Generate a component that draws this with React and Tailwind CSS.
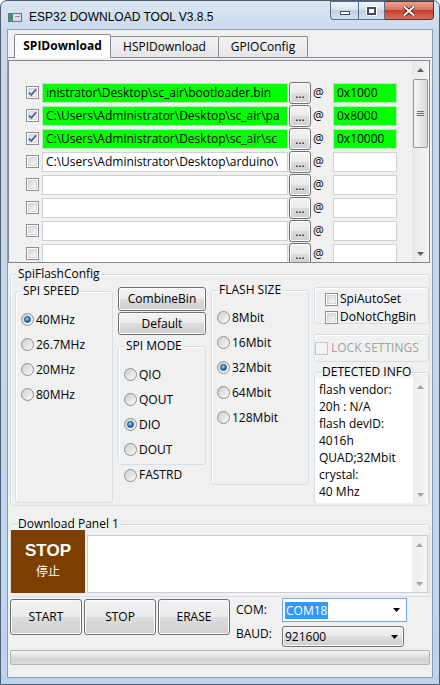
import React from 'react';

const btn =
  'border border-[#707070] rounded-[3px] bg-[linear-gradient(#f2f2f2_0%,#ebebeb_49%,#dddddd_50%,#cfcfcf_100%)] shadow-[inset_0_0_0_1px_#fbfbfb]';

const rows = [
  { on: true, green: true, path: 'inistrator\\Desktop\\sc_air\\bootloader.bin', addr: '0x1000' },
  { on: true, green: true, path: 'C:\\Users\\Administrator\\Desktop\\sc_air\\pa', addr: '0x8000' },
  { on: true, green: true, path: 'C:\\Users\\Administrator\\Desktop\\sc_air\\sc', addr: '0x10000' },
  { on: false, green: false, path: 'C:\\Users\\Administrator\\Desktop\\arduino\\', addr: '' },
  { on: false, green: false, path: '', addr: '' },
  { on: false, green: false, path: '', addr: '' },
  { on: false, green: false, path: '', addr: '' },
  { on: false, green: false, path: '', addr: '' },
];

function Tri({ up, color = '#5c5c5c' }) {
  return (
    <svg width="7" height="4" viewBox="0 0 7 4">
      <path d={up ? 'M0 4 L3.5 0 L7 4 Z' : 'M0 0 L7 0 L3.5 4 Z'} fill={color} />
    </svg>
  );
}

function Check({ checked, disabled }) {
  if (disabled) {
    return <span className="w-[13px] h-[13px] shrink-0 border border-[#c4c4c4] bg-[#f4f4f4]" />;
  }
  return (
    <span className="w-[13px] h-[13px] shrink-0 border border-[#8e8f8f] bg-white p-[1px] flex">
      <span className="flex-1 flex items-center justify-center border border-[#d3d6db] bg-[linear-gradient(135deg,#d4d8de,#f7f7f7)]">
        {checked && (
          <svg width="9" height="9" viewBox="0 0 9 9" className="-m-[1px]">
            <path d="M1 4.6 L3.4 7 L8 1.2" fill="none" stroke="#4b5f99" strokeWidth="1.8" />
          </svg>
        )}
      </span>
    </span>
  );
}

function Radio({ checked, label, className = 'h-[25px]' }) {
  return (
    <div className={`flex items-center ${className}`}>
      <span className="w-[13px] h-[13px] shrink-0 rounded-full border border-[#8e8f8f] bg-[linear-gradient(135deg,#cdcdcd,#fbfbfb)] flex items-center justify-center">
        {checked && (
          <span className="w-[7px] h-[7px] rounded-full border border-[#1d4f80] bg-[radial-gradient(circle_at_40%_35%,#a6e0ff_0%,#2b87d8_45%,#0b3f78_100%)]" />
        )}
      </span>
      <span className="ml-[2px]">{label}</span>
    </div>
  );
}

function Group({ label, className = '', children }) {
  return (
    <fieldset className={`border border-[#d5dfe5] rounded-[3px] shadow-[inset_1px_1px_0_#ffffff] ${className}`}>
      {label && <legend className="ml-[6px] px-[1px] leading-[16px]">{label}</legend>}
      {children}
    </fieldset>
  );
}

function Field({ green, text, className = '' }) {
  return (
    <div
      className={`h-[20px] border overflow-hidden whitespace-nowrap pl-[3px] leading-[18px] ${
        green ? 'bg-[#00ff00] border-[#b8e8b8]' : 'bg-white border-[#cdd1d8]'
      } ${className}`}
    >
      {text}
    </div>
  );
}

function SmallScroll() {
  return (
    <div className="w-[15px] shrink-0 flex flex-col bg-[linear-gradient(90deg,#ececec,#f6f6f6)]">
      <div className="h-[17px] flex items-center justify-center">
        <Tri up color="#a3a3a3" />
      </div>
      <div className="flex-1" />
      <div className="h-[17px] flex items-center justify-center">
        <Tri color="#a3a3a3" />
      </div>
    </div>
  );
}

function FileList() {
  return (
    <div className="mt-[2px] w-[422px] h-[203px] shrink-0 border border-[#828790] flex">
      <div className="flex-1 overflow-hidden pt-[20px]">
        {rows.map((r, i) => (
          <div key={i} className="h-[23px] flex items-center pl-[17px]">
            <Check checked={r.on} />
            <Field green={r.green} text={r.path} className="ml-[3px] w-[246px] shrink-0" />
            <div className={`ml-[1px] w-[22px] h-[22px] shrink-0 flex items-end justify-center leading-[12px] pb-[3px] ${btn}`}>
              ...
            </div>
            <span className="ml-[2px] w-[20px] shrink-0">@</span>
            <Field green={r.green} text={r.addr} className="w-[64px] shrink-0" />
          </div>
        ))}
      </div>
      <div className="w-[17px] shrink-0 flex flex-col bg-[linear-gradient(90deg,#e7e7e7,#f5f5f5)]">
        <div className="h-[17px] flex items-center justify-center">
          <Tri up />
        </div>
        <div className="mt-[1px] mx-[1px] h-[69px] rounded-[2px] border border-[#979797] bg-[linear-gradient(90deg,#f6f6f6,#e8e8e8_50%,#d5d5d5)] flex flex-col items-center justify-center gap-[1px]">
          <span className="w-[7px] h-[1px] bg-[#6f6f6f]" />
          <span className="w-[7px] h-[1px] bg-[#6f6f6f]" />
          <span className="w-[7px] h-[1px] bg-[#6f6f6f]" />
        </div>
        <div className="flex-1" />
        <div className="h-[17px] flex items-center justify-center">
          <Tri />
        </div>
      </div>
    </div>
  );
}

function FlashConfig() {
  return (
    <Group label="SpiFlashConfig" className="ml-[2px] mt-[3px] w-[420px] h-[240px] shrink-0">
      <div className="flex items-start">
        <Group label="SPI SPEED" className="ml-[4px] mt-[1px] w-[98px] h-[220px] shrink-0">
          <div className="pt-[8px] pl-[5px]">
            <Radio checked label="40MHz" />
            <Radio label="26.7MHz" />
            <Radio label="20MHz" />
            <Radio label="80MHz" />
          </div>
        </Group>

        <div className="ml-[5px] w-[88px] shrink-0 flex flex-col">
          <div className={`mt-[5px] h-[24px] flex items-center justify-center ${btn}`}>CombineBin</div>
          <div className={`mt-[1px] h-[23px] flex items-center justify-center ${btn}`}>Default</div>
          <Group label="SPI MODE" className="mt-[3px] h-[127px]">
            <div className="pt-[8px] pl-[5px]">
              <Radio label="QIO" />
              <Radio label="QOUT" />
              <Radio checked label="DIO" />
              <Radio label="DOUT" />
            </div>
          </Group>
          <Radio label="FASTRD" className="mt-[3px] h-[14px] pl-[6px]" />
        </div>

        <Group label="FLASH SIZE" className="ml-[5px] w-[98px] h-[203px] shrink-0">
          <div className="pt-[7px] pl-[5px]">
            <Radio label="8Mbit" />
            <Radio label="16Mbit" />
            <Radio checked label="32Mbit" />
            <Radio label="64Mbit" />
            <Radio label="128Mbit" />
          </div>
        </Group>

        <div className="ml-[5px] w-[115px] shrink-0 flex flex-col">
          <div className="mt-[5px] h-[37px] border border-[#d5dfe5] rounded-[3px] shadow-[inset_1px_1px_0_#ffffff] pl-[10px] pt-[2px]">
            <div className="h-[18px] flex items-center">
              <Check />
              <span className="ml-[2px]">SpiAutoSet</span>
            </div>
            <div className="h-[18px] flex items-center">
              <Check />
              <span className="ml-[2px]">DoNotChgBin</span>
            </div>
          </div>
          <div className="mt-[10px] h-[28px] border border-[#d5dfe5] rounded-[3px] shadow-[inset_1px_1px_0_#ffffff] flex items-center">
            <Check disabled />
            <span className="ml-[3px] text-[#a0a0a0]">LOCK SETTINGS</span>
          </div>
          <Group label="DETECTED INFO" className="mt-[2px] h-[139px]">
            <div className="-mt-[2px] ml-[1px] w-[112px] h-[125px] bg-white flex">
              <div className="flex-1 pl-[3px] pt-[3px] leading-[17px] whitespace-nowrap overflow-hidden">
                <div>flash vendor:</div>
                <div>20h : N/A</div>
                <div>flash devID:</div>
                <div>4016h</div>
                <div>QUAD;32Mbit</div>
                <div>crystal:</div>
                <div>40 Mhz</div>
              </div>
              <SmallScroll />
            </div>
          </Group>
        </div>
      </div>
    </Group>
  );
}

function DownloadPanel() {
  return (
    <Group label="Download Panel 1" className="ml-[2px] mt-[10px] w-[420px] h-[81px] shrink-0">
      <div className="flex items-start">
        <div className="-mt-[2px] w-[74px] h-[63px] shrink-0 bg-[#7d3f00] flex flex-col items-center text-white">
          <span className="mt-[11px] text-[17px] leading-[20px] font-bold font-['Liberation_Sans',Arial,sans-serif]">STOP</span>
          <span className="mt-[3px] text-[12px] leading-[14px] font-['Noto_Sans_CJK_SC',sans-serif]">停止</span>
        </div>
        <div className="ml-[2px] mt-[3px] w-[341px] h-[58px] bg-white border border-[#c9cdd4] flex justify-end">
          <SmallScroll />
        </div>
      </div>
    </Group>
  );
}

function BottomBar() {
  return (
    <>
      <div className="mt-[2px] ml-[2px] flex items-start shrink-0">
        <div className="flex gap-[2px]">
          <div className={`w-[72px] h-[36px] flex items-center justify-center ${btn}`}>START</div>
          <div className={`w-[72px] h-[36px] flex items-center justify-center ${btn}`}>STOP</div>
          <div className={`w-[72px] h-[36px] flex items-center justify-center ${btn}`}>ERASE</div>
        </div>
        <div className="ml-[6px] -mt-[1px] flex flex-col">
          <div className="h-[24px] flex items-center">
            <span className="w-[46px]">COM:</span>
            <div className="w-[125px] h-[24px] bg-white border border-[#6fa8e0] flex items-center pl-[2px] pr-[6px]">
              <span className="bg-[#3399ff] text-white px-[1px] leading-[17px]">COM18</span>
              <span className="ml-auto">
                <Tri color="#000000" />
              </span>
            </div>
          </div>
          <div className="mt-[4px] h-[21px] flex items-start">
            <span className="w-[46px]">BAUD:</span>
            <div className={`w-[122px] h-[21px] flex items-center pl-[2px] pr-[5px] ${btn}`}>
              <span>921600</span>
              <span className="ml-auto">
                <Tri color="#000000" />
              </span>
            </div>
          </div>
        </div>
      </div>
      <div className="mt-[3px] ml-[2px] w-[420px] h-[15px] shrink-0 rounded-[2px] border border-[#b2b2b2] bg-[linear-gradient(#f4f4f4,#e6e6e6_35%,#d2d2d2_65%,#dcdcdc)]" />
    </>
  );
}

function AppIcon() {
  return (
    <svg width="14" height="9" viewBox="0 0 14 9">
      <rect x="0.5" y="0.5" width="13" height="8" fill="#d9dde2" stroke="#6b7380" />
      <rect x="1" y="1" width="4" height="7" fill="#3e8f7a" />
      <rect x="7" y="3" width="5" height="1" fill="#8b929c" />
    </svg>
  );
}

function WindowButtons() {
  return (
    <div className="ml-auto mr-[5px] flex h-[19px]">
      <div className="w-[28px] border border-[#5b6c83] border-r-0 rounded-bl-[4px] bg-[linear-gradient(#eef3f9,#d9e3ef_45%,#c2d0e2_50%,#d3e0ef)] flex items-center justify-center">
        <span className="mt-[4px] w-[10px] h-[4px] bg-white border border-[#3f4b5c]" />
      </div>
      <div className="w-[27px] border border-[#5b6c83] bg-[linear-gradient(#eef3f9,#d9e3ef_45%,#c2d0e2_50%,#d3e0ef)] flex items-center justify-center">
        <span className="w-[9px] h-[8px] border-2 border-[#3f4b5c] bg-white shadow-[0_0_0_1px_#ffffff]" />
      </div>
      <div className="w-[49px] border border-[#6a2a24] border-l-0 rounded-br-[4px] bg-[linear-gradient(#e8a593,#d7725f_45%,#c4402f_50%,#d5705a)] flex items-center justify-center">
        <svg width="12" height="10" viewBox="0 0 12 10">
          <path d="M1.5 1 L10.5 9 M10.5 1 L1.5 9" stroke="#4a1a14" strokeWidth="3.6" strokeLinecap="square" />
          <path d="M1.5 1 L10.5 9 M10.5 1 L1.5 9" stroke="#ffffff" strokeWidth="2" strokeLinecap="square" />
        </svg>
      </div>
    </div>
  );
}

export default function App() {
  return (
    <div className="w-[440px] h-[685px] flex flex-col border border-[#4f5d70] rounded-t-[7px] overflow-hidden bg-[linear-gradient(#dbe6f2,#c9d9ec_30px,#bdd3ee)] text-[12px] leading-[16px] text-black font-['Open_Sans','Liberation_Sans',sans-serif]">
      <div className="h-[29px] shrink-0 flex items-start">
        <div className="pl-[7px] pt-[9px] flex items-center">
          <AppIcon />
          <span className="ml-[7px] leading-[14px] font-['Liberation_Sans',Arial,sans-serif]">ESP32 DOWNLOAD TOOL V3.8.5</span>
        </div>
        <WindowButtons />
      </div>

      <div className="mx-[7px] h-[647px] shrink-0 bg-[#f0f0f0] flex flex-col overflow-hidden shadow-[0_0_0_1px_#8d9bb0]">
        <div className="h-[27px] shrink-0 flex items-end pl-[6px]">
          <div className="relative z-10 -mb-[1px] w-[97px] h-[24px] bg-white border border-b-0 border-[#898c95] rounded-t-[2px] font-bold text-center pt-[3px]">
            SPIDownload
          </div>
          <div className="w-[108px] h-[21px] border-t border-r border-[#898c95] rounded-tr-[2px] bg-[linear-gradient(#f3f3f3,#e5e5e5)] text-center pt-[2px]">
            HSPIDownload
          </div>
          <div className="w-[89px] h-[21px] border-t border-r border-[#898c95] rounded-t-[2px] bg-[linear-gradient(#f3f3f3,#e5e5e5)] text-center pt-[2px]">
            GPIOConfig
          </div>
        </div>

        <div className="flex-1 border-t border-[#898c95] flex flex-col">
          <FileList />
          <FlashConfig />
          <DownloadPanel />
          <BottomBar />
        </div>
      </div>
    </div>
  );
}
